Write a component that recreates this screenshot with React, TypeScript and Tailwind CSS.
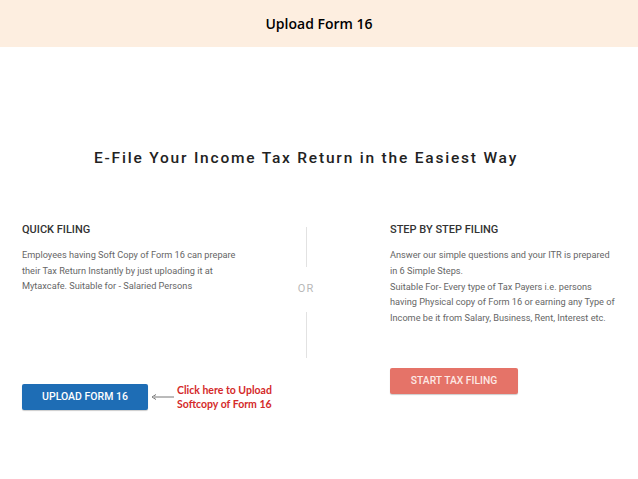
const QuickFiling = () => {
    return (
        <div className="flex flex-col">
            <h3 className="text-[11px] font-medium leading-[14px] text-[#333]">QUICK FILING</h3>
            <p className="mt-[10.5px] text-[9.2px] leading-[15.5px] text-[#666]">
                Employees having Soft Copy of Form 16 can prepare
                <br />
                their Tax Return Instantly by just uploading it at
                <br />
                Mytaxcafe. Suitable for - Salaried Persons
            </p>
        </div>
    );
};

const StepFiling = () => {
    return (
        <div className="flex flex-col">
            <h3 className="text-[11px] font-medium leading-[14px] text-[#333]">STEP BY STEP FILING</h3>
            <p className="mt-[10.5px] text-[9.2px] leading-[15.8px] text-[#666]">
                Answer our simple questions and your ITR is prepared
                <br />
                in 6 Simple Steps.
                <br />
                Suitable For- Every type of Tax Payers i.e. persons
                <br />
                having Physical copy of Form 16 or earning any Type of
                <br />
                Income be it from Salary, Business, Rent, Interest etc.
            </p>
        </div>
    );
};

const Divider = () => {
    return (
        <div className="flex w-[30px] flex-col items-center pt-[4.5px]">
            <div className="h-[40px] w-px bg-[#e2e2e2]" />
            <span className="mt-[15px] text-[11px] leading-[14px] tracking-[1px] text-[#b8b8b8]">OR</span>
            <div className="mt-[16px] h-[46px] w-px bg-[#e2e2e2]" />
        </div>
    );
};

export default function App() {
    return (
        <div className="h-[479px] w-[638px] bg-white font-['Roboto',sans-serif]">
            <div className="flex h-[47px] items-center justify-center bg-[#fdeee0]">
                <span className="font-['Open_Sans',sans-serif] text-[14px] font-semibold text-black">
                    Upload Form 16
                </span>
            </div>

            <h1 className="mt-[101px] pr-[26px] text-center text-[15.5px] font-medium leading-[20px] tracking-[1.8px] text-[#222]">
                E-File Your Income Tax Return in the Easiest Way
            </h1>

            <div className="mt-[54.5px] flex">
                <div className="ml-[22px] flex w-[262px] flex-col">
                    <QuickFiling />
                    <div className="mt-[89px] flex items-center">
                        <button
                            type="button"
                            className="h-[26px] w-[126px] shrink-0 rounded-[2px] bg-[#1e6db5] text-[10.5px] font-medium text-white shadow-[0_1px_1px_rgba(0,0,0,0.2)]"
                        >
                            UPLOAD FORM 16
                        </button>
                        <svg width="24" height="8" viewBox="0 0 24 8" className="ml-[3px] shrink-0">
                            <line x1="3" y1="4" x2="23" y2="4" stroke="#777" strokeWidth="1" />
                            <path d="M5 1.5 L1 4 L5 6.5" fill="none" stroke="#777" strokeWidth="1" />
                        </svg>
                        <div className="ml-[2px] whitespace-nowrap font-['Lato',sans-serif] text-[10.5px] font-bold leading-[14px] text-[#d42a2a]">
                            Click here to Upload
                            <br />
                            Softcopy of Form 16
                        </div>
                    </div>
                </div>

                <div className="ml-[7px]">
                    <Divider />
                </div>

                <div className="ml-[69px] flex flex-col">
                    <StepFiling />
                    <button
                        type="button"
                        className="mt-[42px] h-[26px] w-[128px] rounded-[2px] bg-[#e57368] text-[10.3px] font-medium text-[#fde8e4] shadow-[0_1px_1px_rgba(0,0,0,0.2)]"
                    >
                        START TAX FILING
                    </button>
                </div>
            </div>
        </div>
    );
}
